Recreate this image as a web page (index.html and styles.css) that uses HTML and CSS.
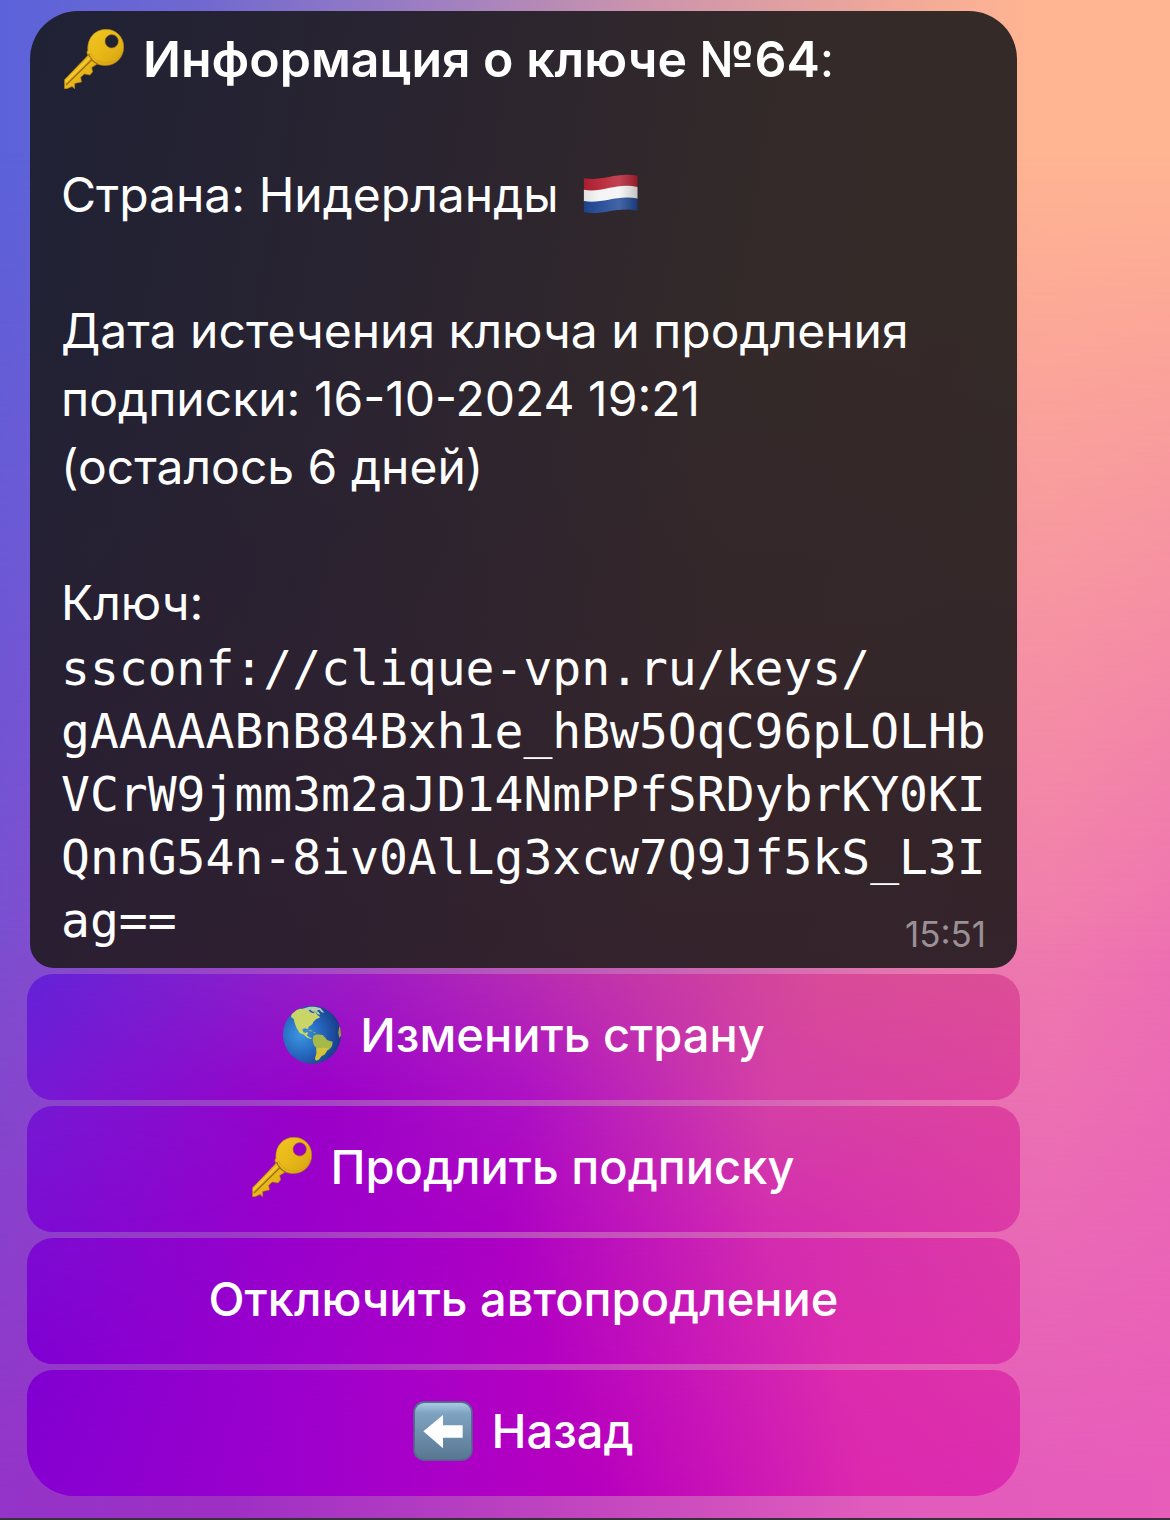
FILE: index.html
```html
<!DOCTYPE html>
<html lang="ru">
<head>
<meta charset="utf-8">
<meta name="viewport" content="width=device-width, initial-scale=1">
<title>Информация о ключе</title>
<link rel="stylesheet" href="styles.css">
</head>
<body>
<svg class="defs" aria-hidden="true">
  <defs>
    <linearGradient id="gold" x1="0" y1="0" x2="1" y2="1">
      <stop offset="0" stop-color="#f5cf2c"/><stop offset=".5" stop-color="#e8b818"/><stop offset="1" stop-color="#c9960f"/>
    </linearGradient>
    <symbol id="key" viewBox="0 0 60 60">
      <path fill="url(#gold)" stroke="#a87812" stroke-width=".6" fill-rule="evenodd" d="M42 .3C52 .3 59.800 8 59.800 18S52 36.500 42 36.500c-4 0-7-.6-9-1.500L31 36.500l-3.300 2 1 4.300L26 46l-5.700-1-3.600 3.300.8 4.700-6.800 1.500v5.200L8 57.500 3 59.700H.4v-8.900L23.800 26.500 22.800 23l1-1.500C23 9 31 .3 42 .3ZM47.700 5.600a6.700 6.700 0 1 0 0 13.400 6.700 6.700 0 0 0 0-13.400Z"/>
      <path fill="none" stroke="#9a6a10" stroke-width="1.300" d="M2 56 27.500 31M24.500 25c2 5 5 8.500 9.500 10"/>
      <path fill="none" stroke="#ffe05a" stroke-width="1" d="M1.500 53 26 28.500"/>
      <path fill="none" stroke="#cfa016" stroke-width=".8" d="M26.500 24c3 6 8 10 16 10s14-5 15.500-12"/>
    </symbol>
  </defs>
</svg>
<main class="chat">
  <article class="bubble">
    <p class="text"><svg class="emoji" role="img" aria-label="Ключ"><use href="#key"/></svg><span class="heading"><strong class="title">Информация о ключе №64</strong>:</span></p>
    <p class="text">Страна: Нидерланды<svg class="flag" viewBox="76 68 168 124" role="img" aria-label="Флаг Нидерландов">
      <defs>
        <linearGradient id="wave"><stop offset="0" stop-color="#000" stop-opacity=".08"/><stop offset=".3" stop-color="#fff" stop-opacity=".06"/><stop offset=".65" stop-color="#fff" stop-opacity=".16"/><stop offset="1" stop-color="#000" stop-opacity=".2"/></linearGradient>
      </defs>
      <path fill="#b52032" d="M78 84c54 10 98-20 162-8v36c-60-12-108 18-162 8Z"/>
      <path fill="#f4f4f4" d="M78 119c54 10 98-22 162-9v37c-60-12-108 18-162 7Z"/>
      <path fill="#1f4795" d="M78 153c54 10 98-20 162-8v37c-60-14-108 16-162 4Z"/>
      <path fill="url(#wave)" d="M78 84c54 10 98-20 162-8v106c-60-14-108 16-162 4Z"/>
    </svg></p>
    <p class="text">Дата истечения ключа и продления<br>подписки: 16-10-2024 19:21<br>(осталось 6 дней)</p>
    <p class="text">Ключ:</p>
    <code class="code">ssconf://clique-vpn.ru/keys/<br>gAAAAABnB84Bxh1e_hBw5OqC96pLOLHb<br>VCrW9jmm3m2aJD14NmPPfSRDybrKY0KI<br>QnnG54n-8iv0AlLg3xcw7Q9Jf5kS_L3I<br>ag==</code>
    <time class="time" datetime="15:51">15:51</time>
  </article>
  <div class="keyboard">
    <button type="button" class="key-button row-a">
      <svg class="emoji" viewBox="66 45 180 180" aria-hidden="true">
        <defs>
          <radialGradient id="sea" cx=".3" cy=".5" r=".7"><stop offset="0" stop-color="#3c97e0"/><stop offset=".5" stop-color="#2668bf"/><stop offset="1" stop-color="#173a86"/></radialGradient>
          <clipPath id="disc"><circle cx="156" cy="134" r="87"/></clipPath>
        </defs>
        <circle cx="156" cy="134" r="87" fill="url(#sea)"/>
        <g clip-path="url(#disc)">
          <path fill="#c9d566" d="M96 68 106 60 122 56l22 2 6 8 10 4 6-5 6 10 9 7-13 6-8 7-3 8-11 7-2 7-10-2-7 3 3 9 7 2 4-4 3 4-3 7 6 6 8 2-2 3-12-4-9-9-13-5-9-14-5-13-4-15-8-6Z"/>
          <path fill="#b3cfae" d="M128 56l20-6 16 0 17 4 12 14-8-1-7-8-8 3 8 6 3 7-8-2-6-8-8 0-9-6-8 3Z"/>
          <path fill="#7fb96b" d="M142 120l8-1 8 4-2 2-9-3ZM160 126l7 1-1 3-6-1Z"/>
          <path fill="#a5b84a" d="M160 137l10-4 18 2 9 9 4 6 17 5-2 14-9 10-7 3-6 12-10 5-8 11-8 2-3-8 5-14-1-16-8-10-3-14Z"/>
          <path fill="#d6c238" d="M165 208l5-20-1-13 22-2 14 2-8 14-12 8-8 10-8 4Z"/>
          <path fill="#a89a3a" d="M238 108l6 8v20l-6 8-3-16Z"/>
        </g>
      </svg>
      <span>Изменить страну</span>
    </button>
    <button type="button" class="key-button row-b">
      <svg class="emoji" aria-hidden="true"><use href="#key"/></svg>
      <span>Продлить подписку</span>
    </button>
    <button type="button" class="key-button row-c"><span>Отключить автопродление</span></button>
    <button type="button" class="key-button row-d">
      <svg class="emoji" viewBox="48 47 180 180" aria-hidden="true">
        <defs>
          <linearGradient id="tile" x1="0" y1="0" x2="0" y2="1"><stop offset="0" stop-color="#a9cbe2"/><stop offset=".18" stop-color="#7fa3c2"/><stop offset="1" stop-color="#587791"/></linearGradient>
        </defs>
        <rect x="49" y="48" width="178" height="178" rx="32" fill="#4f6f8d"/>
        <rect x="54" y="53" width="168" height="168" rx="28" fill="url(#tile)"/>
        <path fill="#fff" d="M79 138 138 89v31h59v37h-59v32Z"/>
      </svg>
      <span>Назад</span>
    </button>
  </div>
</main>
</body>
</html>
```
FILE: styles.css
```css
:root {
  --line-0: linear-gradient(to right, #6322d8, #a01cc4 35%, #bd30ae 55%, #d94b98 80%, #dc4f96);
  --line-1: linear-gradient(to right, #7519d4, #9c00c8 30%, #ad10c4 50%, #d440a6 75%, #de429f);
  --line-2: linear-gradient(to right, #7c0cd2, #9800cc 25%, #ac00c4 48%, #d42cb0 75%, #dd3ba6);
  --line-3: linear-gradient(to right, #8000d2, #a000cc 30%, #b400c2 52%, #dc2cae 82%, #dd34aa);
  --line-4: linear-gradient(to right, #8600d0, #a000cc 30%, #b800be 58%, #dc28ae 84%, #dc2cb0);
}

* {
  box-sizing: border-box;
}

body {
  position: relative;
  min-height: 100vh;
  margin: 0;
  border-bottom: 2px solid #3a2f3c;
  background: linear-gradient(to right, #5b62da, #7068d0 17%, #a080c0 38%, #cc94ac 55%, #f2aa98 78%, #ffb592 88%, #ffb592);
  color: #fff;
  font-family: Inter, "Noto Sans", sans-serif;
  isolation: isolate;
}

/* Two more colour bands, faded in from top to bottom */
body::before,
body::after {
  content: "";
  position: absolute;
  inset: 0;
  z-index: -1;
}

body::before {
  background: linear-gradient(to right, #7c4fd0, #9a48c8 20%, #c060b8 50%, #e87cae 80%, #f07aae 90%, #ee70b2);
  -webkit-mask-image: linear-gradient(to bottom, transparent 10%, #000 64%);
  mask-image: linear-gradient(to bottom, transparent 10%, #000 64%);
}

body::after {
  background: linear-gradient(to right, #9434c8, #9f2fc4 20%, #c044c0 48%, #e05cbc 75%, #e85cba);
  -webkit-mask-image: linear-gradient(to bottom, transparent 60%, #000 98%);
  mask-image: linear-gradient(to bottom, transparent 60%, #000 98%);
}

.defs {
  position: absolute;
  width: 0;
  height: 0;
}

.chat {
  padding: 11px 150px 22px 27px;
}

.bubble {
  position: relative;
  margin: 0 3px 6px;
  padding: 14px 31px 16px;
  border-radius: 48px 48px 24px 24px;
  background:
    linear-gradient(to bottom, transparent 30%, rgba(52, 24, 48, 0.4)),
    linear-gradient(100deg, #1f2135, #2a2430 36%, #342a29 68%, #342b27);
}

.text {
  margin: 0 0 68px;
  font-size: 48px;
  line-height: 68px;
  white-space: nowrap;
}

.text:nth-of-type(1) {
  display: flex;
  align-items: center;
  height: 68px;
}

.text:nth-of-type(4) {
  margin-bottom: 0;
}

.heading {
  font-size: 50px;
}

.title {
  font-weight: 600;
}

.emoji {
  flex: none;
  width: 60px;
  height: 60px;
}

.text .emoji {
  margin: 0 19px 0 3px;
}

.flag {
  width: 56px;
  height: 41px;
  margin-left: 24px;
  vertical-align: -2px;
}

.code {
  display: block;
  font-family: "DejaVu Sans Mono", monospace;
  font-size: 48px;
  line-height: 63px;
}

.time {
  position: absolute;
  right: 31px;
  bottom: 14px;
  color: #9a9196;
  font-size: 35px;
  line-height: 40px;
}

.keyboard {
  display: grid;
  gap: 6px;
}

.key-button {
  position: relative;
  display: flex;
  align-items: center;
  justify-content: center;
  gap: 18px;
  height: 126px;
  padding: 0 0 4px;
  overflow: hidden;
  border: 0;
  border-radius: 26px;
  background: var(--from);
  color: #fff;
  font: 500 47px/60px Inter, "Noto Sans", sans-serif;
  isolation: isolate;
}

.key-button::before {
  content: "";
  position: absolute;
  inset: 0;
  z-index: -1;
  background: var(--to);
  -webkit-mask-image: linear-gradient(to bottom, transparent, #000);
  mask-image: linear-gradient(to bottom, transparent, #000);
}

.row-a {
  --from: var(--line-0);
  --to: var(--line-1);
}

.row-b {
  --from: var(--line-1);
  --to: var(--line-2);
}

.row-c {
  --from: var(--line-2);
  --to: var(--line-3);
}

.row-d {
  --from: var(--line-3);
  --to: var(--line-4);
  border-radius: 26px 26px 48px 48px;
}
```
